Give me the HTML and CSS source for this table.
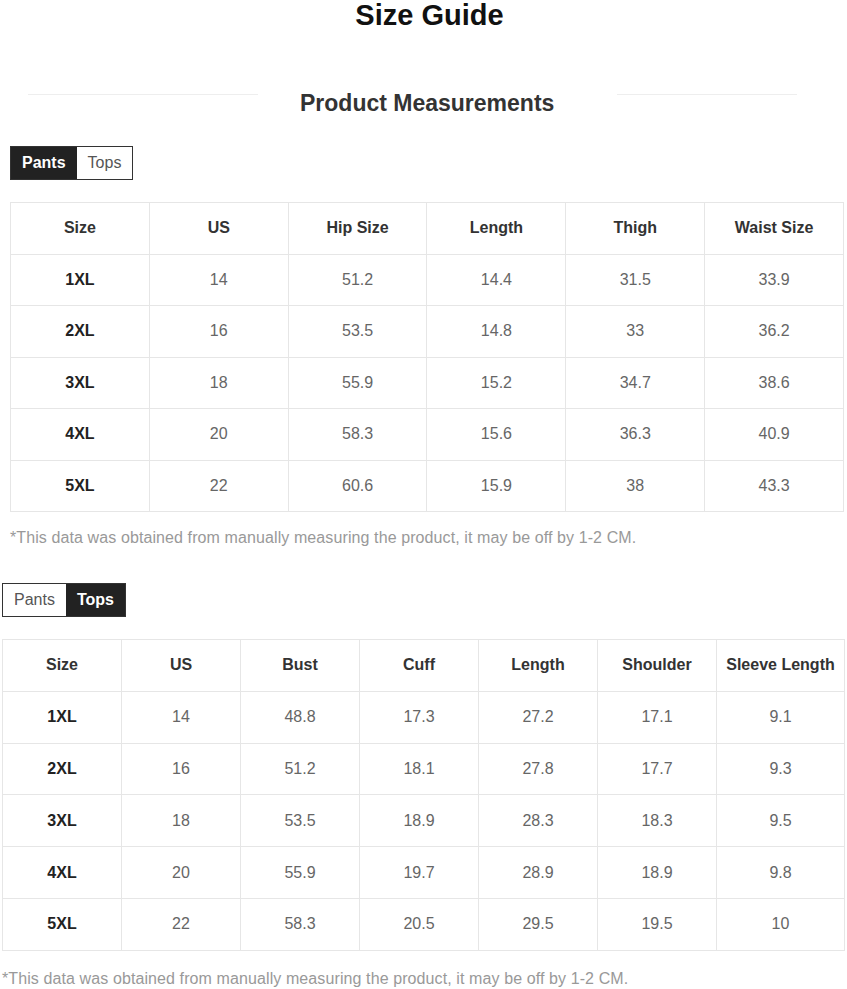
FILE: index.html
```html
<!DOCTYPE html>
<html>
<head>
<meta charset="utf-8">
<link rel="stylesheet" href="styles.css">
</head>
<body>
<div class="page">
  <h1 class="title">Size Guide</h1>
  <div class="section-head">
    <span class="rule rule-left"></span>
    <h2 class="subtitle">Product Measurements</h2>
    <span class="rule rule-right"></span>
  </div>

  <section class="block block-pants">
    <div class="tabs">
      <span class="tab active">Pants</span>
      <span class="tab">Tops</span>
    </div>
    <table class="sizes">
      <tr><th>Size</th><th>US</th><th>Hip Size</th><th>Length</th><th>Thigh</th><th>Waist Size</th></tr>
      <tr><td class="sz">1XL</td><td>14</td><td>51.2</td><td>14.4</td><td>31.5</td><td>33.9</td></tr>
      <tr><td class="sz">2XL</td><td>16</td><td>53.5</td><td>14.8</td><td>33</td><td>36.2</td></tr>
      <tr><td class="sz">3XL</td><td>18</td><td>55.9</td><td>15.2</td><td>34.7</td><td>38.6</td></tr>
      <tr><td class="sz">4XL</td><td>20</td><td>58.3</td><td>15.6</td><td>36.3</td><td>40.9</td></tr>
      <tr><td class="sz">5XL</td><td>22</td><td>60.6</td><td>15.9</td><td>38</td><td>43.3</td></tr>
    </table>
    <p class="note">*This data was obtained from manually measuring the product, it may be off by 1-2 CM.</p>
  </section>

  <section class="block block-tops">
    <div class="tabs">
      <span class="tab">Pants</span>
      <span class="tab active">Tops</span>
    </div>
    <table class="sizes sizes-tops">
      <colgroup>
        <col class="c-std"><col class="c-std"><col class="c-std"><col class="c-std"><col class="c-std"><col class="c-std"><col class="c-wide">
      </colgroup>
      <tr><th>Size</th><th>US</th><th>Bust</th><th>Cuff</th><th>Length</th><th>Shoulder</th><th>Sleeve Length</th></tr>
      <tr><td class="sz">1XL</td><td>14</td><td>48.8</td><td>17.3</td><td>27.2</td><td>17.1</td><td>9.1</td></tr>
      <tr><td class="sz">2XL</td><td>16</td><td>51.2</td><td>18.1</td><td>27.8</td><td>17.7</td><td>9.3</td></tr>
      <tr><td class="sz">3XL</td><td>18</td><td>53.5</td><td>18.9</td><td>28.3</td><td>18.3</td><td>9.5</td></tr>
      <tr><td class="sz">4XL</td><td>20</td><td>55.9</td><td>19.7</td><td>28.9</td><td>18.9</td><td>9.8</td></tr>
      <tr><td class="sz">5XL</td><td>22</td><td>58.3</td><td>20.5</td><td>29.5</td><td>19.5</td><td>10</td></tr>
    </table>
    <p class="note note-last">*This data was obtained from manually measuring the product, it may be off by 1-2 CM.</p>
  </section>
</div>
</body>
</html>
```
FILE: styles.css
```css
html, body {
  margin: 0;
  padding: 0;
  background: #ffffff;
}
body {
  font-family: "Liberation Sans", Arial, sans-serif;
  color: #333;
}
.page {
  width: 847px;
  overflow: hidden;
}
.title {
  margin: 0;
  height: 30px;
  line-height: 30px;
  text-align: center;
  font-size: 29px;
  font-weight: bold;
  color: #111;
  padding-left: 12px;
}
.section-head {
  display: flex;
  align-items: center;
  margin-top: 58px;
  padding-left: 28px;
  height: 30px;
}
.rule {
  display: block;
  height: 1px;
  background: #eeeeee;
  margin-top: -18px;
}
.rule-left { width: 230px; margin-right: 42px; }
.rule-right { width: 180px; margin-left: 63px; }
.subtitle {
  margin: 0;
  font-size: 23px;
  font-weight: bold;
  color: #333;
  line-height: 30px;
  white-space: nowrap;
}
.block-pants {
  margin-left: 10px;
  margin-top: 28px;
  width: 834px;
}
.block-tops {
  margin-left: 2px;
  margin-top: 35px;
  width: 842px;
}
.tabs {
  display: inline-flex;
  border: 1px solid #333;
  height: 32px;
}
.tab {
  display: flex;
  align-items: center;
  padding: 0 11px;
  font-size: 16px;
  color: #555;
  background: #fff;
}
.tab.active {
  background: #222;
  color: #fff;
  font-weight: bold;
}
.sizes {
  width: 100%;
  border-collapse: collapse;
  table-layout: fixed;
  margin-top: 22px;
}
.sizes-tops { margin-top: 22px; }
.c-std { width: 119px; }
.c-wide { width: 128px; }
.sizes th, .sizes td {
  border: 1px solid #e6e6e6;
  height: 50.5px;
  padding: 0;
  text-align: center;
  font-size: 16px;
}
.sizes-tops th, .sizes-tops td { height: 50.8px; }
.sizes th {
  font-weight: bold;
  color: #333;
}
.sizes td {
  color: #666;
}
.sizes td.sz {
  font-weight: bold;
  color: #222;
}
.note {
  margin: 16px 0 0 0;
  font-size: 16px;
  line-height: 20px;
  letter-spacing: 0.1px;
  color: #999;
}
.note-last {
  margin-top: 18px;
}
```
